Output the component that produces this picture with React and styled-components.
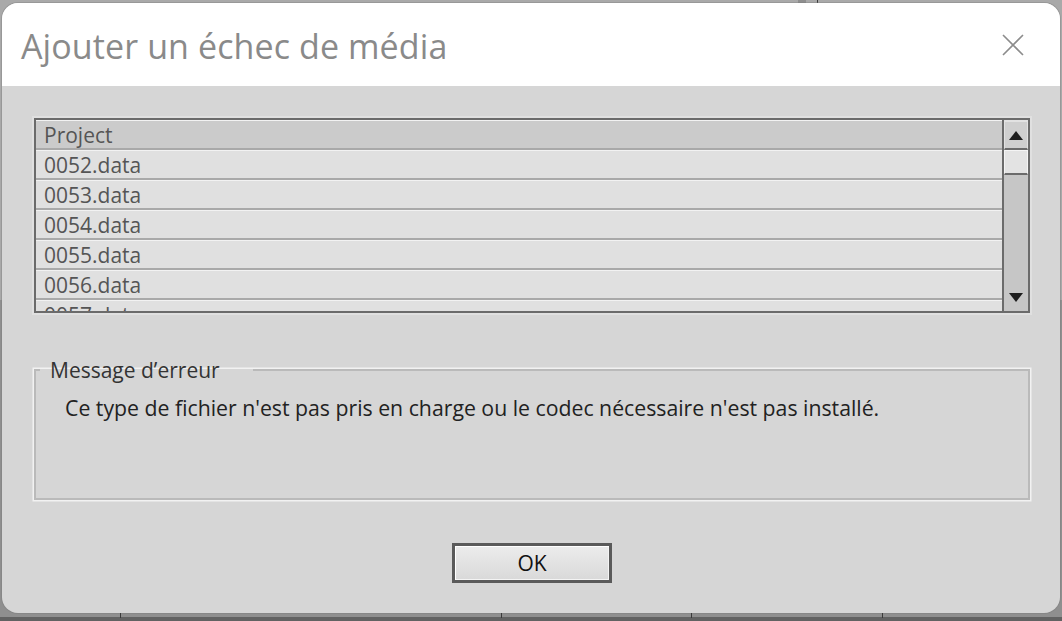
import React from "react";
import styled, { createGlobalStyle } from "styled-components";

const Global = createGlobalStyle`
  html, body { margin: 0; padding: 0; }
  body {
    width: 1062px;
    height: 621px;
    overflow: hidden;
    font-family: "Open Sans", "Noto Sans", sans-serif;
  }
`;

const Page = styled.div`
  width: 1062px;
  height: 621px;
  box-sizing: border-box;
  display: flex;
  flex-direction: column;
  padding: 3px 2px 0 2px;
  background:
    linear-gradient(to right, transparent 798px, #8e8e8e 798px, #8e8e8e 806px, transparent 806px, transparent 817px, #3a3a3a 817px, #3a3a3a 818px, transparent 818px) top / 100% 3px no-repeat,
    linear-gradient(to bottom, #a9a9a9 0, #a9a9a9 300px, #8f8f8f 300px, #8f8f8f 617px, #626262 617px);
`;

const Dialog = styled.div`
  width: 1058px;
  height: 610px;
  border-radius: 16px;
  overflow: hidden;
  display: flex;
  flex-direction: column;
  background: #d6d6d6;
  box-shadow: 0 0 0 1px rgba(120, 120, 120, 0.35);
`;

const BottomStrip = styled.div`
  flex: 1;
  background: repeating-linear-gradient(
    to right,
    transparent 0,
    transparent 118px,
    #3c3c3c 118px,
    #3c3c3c 119px,
    transparent 119px,
    transparent 190.5px
  ) top / 100% 5px no-repeat;
`;

const TitleBar = styled.div`
  height: 83px;
  flex: none;
  background: #ffffff;
  display: flex;
  align-items: center;
  justify-content: space-between;
  padding: 0 36px 0 19px;
`;

const Title = styled.div`
  font-size: 34px;
  color: #8a8a8a;
  font-weight: 400;
  letter-spacing: 0.1px;
  margin-top: 2px;
`;

const CloseIcon = styled.svg`
  width: 22px;
  height: 22px;
  display: block;
`;

const Body = styled.div`
  flex: 1;
  display: flex;
  flex-direction: column;
  padding: 32px 30px 0 32px;
`;

const ListBox = styled.div`
  height: 195px;
  box-sizing: border-box;
  border: 2px solid #6b6b6b;
  display: grid;
  grid-template-columns: 1fr 26px;
  overflow: hidden;
  box-shadow: 0 0 0 2px #e0e0e0;
`;

const Rows = styled.div`
  overflow: hidden;
  display: flex;
  flex-direction: column;
`;

const Row = styled.div`
  flex: none;
  height: 30px;
  box-sizing: border-box;
  border-top: 1px solid #f2f2f2;
  border-bottom: 2px solid #a9a9a9;
  background: ${(p) => (p.$header ? "#cbcbcb" : "#e0e0e0")};
  color: #555555;
  font-size: 21px;
  line-height: 28px;
  padding-left: 8px;
  white-space: nowrap;
`;

const ScrollBar = styled.div`
  border-left: 2px solid #6b6b6b;
  background: #c6c6c6;
  display: flex;
  flex-direction: column;
`;

const UpButton = styled.div`
  height: 30px;
  box-sizing: border-box;
  border-top: 2px solid #e2e2e2;
  border-left: 1px solid #e2e2e2;
  border-right: 1px solid #e2e2e2;
  border-bottom: 2px solid #6b6b6b;
  background: #cfcfcf;
  display: flex;
  align-items: center;
  justify-content: center;
`;

const Thumb = styled.div`
  height: 25px;
  box-sizing: border-box;
  border: 1px solid #f4f4f4;
  border-bottom: 2px solid #6b6b6b;
  background: #e3e3e3;
`;

const Spacer = styled.div`
  flex: 1;
`;

const DownButton = styled.div`
  height: 28px;
  display: flex;
  align-items: center;
  justify-content: center;
  padding-top: 2px;
`;

const Arrow = styled.svg`
  width: 14px;
  height: 9px;
  display: block;
`;

const Group = styled.fieldset`
  margin: 44px 0 0 0;
  padding: 0;
  height: 143px;
  box-sizing: border-box;
  border: 2px solid #bababa;
  box-shadow: 0 0 0 1.5px #f2f2f2;
  min-width: 0;
`;

const Legend = styled.legend`
  margin-left: 4px;
  padding: 0 33px 0 10px;
  font-size: 21px;
  line-height: 26px;
  color: #333333;
`;

const Message = styled.div`
  padding: 12px 0 0 29px;
  font-size: 21.25px;
  color: #222222;
  line-height: 26px;
  white-space: nowrap;
`;

const Footer = styled.div`
  display: flex;
  justify-content: center;
  padding-top: 43px;
`;

const OkButton = styled.button`
  width: 160px;
  height: 40px;
  box-sizing: border-box;
  border: 3px solid #5a5a5a;
  background: linear-gradient(to bottom, #ececec, #d9d9d9);
  box-shadow: inset 1px 1px 0 #ffffff, inset -1px -1px 0 #f4f4f4;
  font-family: "Open Sans", "Noto Sans", sans-serif;
  font-size: 21px;
  color: #111111;
  padding: 0;
  line-height: 30px;
`;

const files = ["0052.data", "0053.data", "0054.data", "0055.data", "0056.data", "0057.data"];

export default function App() {
  return (
    <>
      <Global />
      <Page>
        <Dialog>
          <TitleBar>
            <Title>Ajouter un échec de média</Title>
            <CloseIcon viewBox="0 0 22 22">
              <path d="M1 1 L21 21 M21 1 L1 21" stroke="#8c8c8c" strokeWidth="1.6" fill="none" />
            </CloseIcon>
          </TitleBar>
          <Body>
            <ListBox>
              <Rows>
                <Row $header>Project</Row>
                {files.map((f) => (
                  <Row key={f}>{f}</Row>
                ))}
              </Rows>
              <ScrollBar>
                <UpButton>
                  <Arrow viewBox="0 0 14 9">
                    <path d="M7 0 L14 9 L0 9 Z" fill="#1e1e1e" />
                  </Arrow>
                </UpButton>
                <Thumb />
                <Spacer />
                <DownButton>
                  <Arrow viewBox="0 0 14 9">
                    <path d="M0 0 L14 0 L7 9 Z" fill="#1e1e1e" />
                  </Arrow>
                </DownButton>
              </ScrollBar>
            </ListBox>
            <Group>
              <Legend>Message d’erreur</Legend>
              <Message>
                Ce type de fichier n'est pas pris en charge ou le codec nécessaire n'est pas installé.
              </Message>
            </Group>
            <Footer>
              <OkButton>OK</OkButton>
            </Footer>
          </Body>
        </Dialog>
        <BottomStrip />
      </Page>
    </>
  );
}
